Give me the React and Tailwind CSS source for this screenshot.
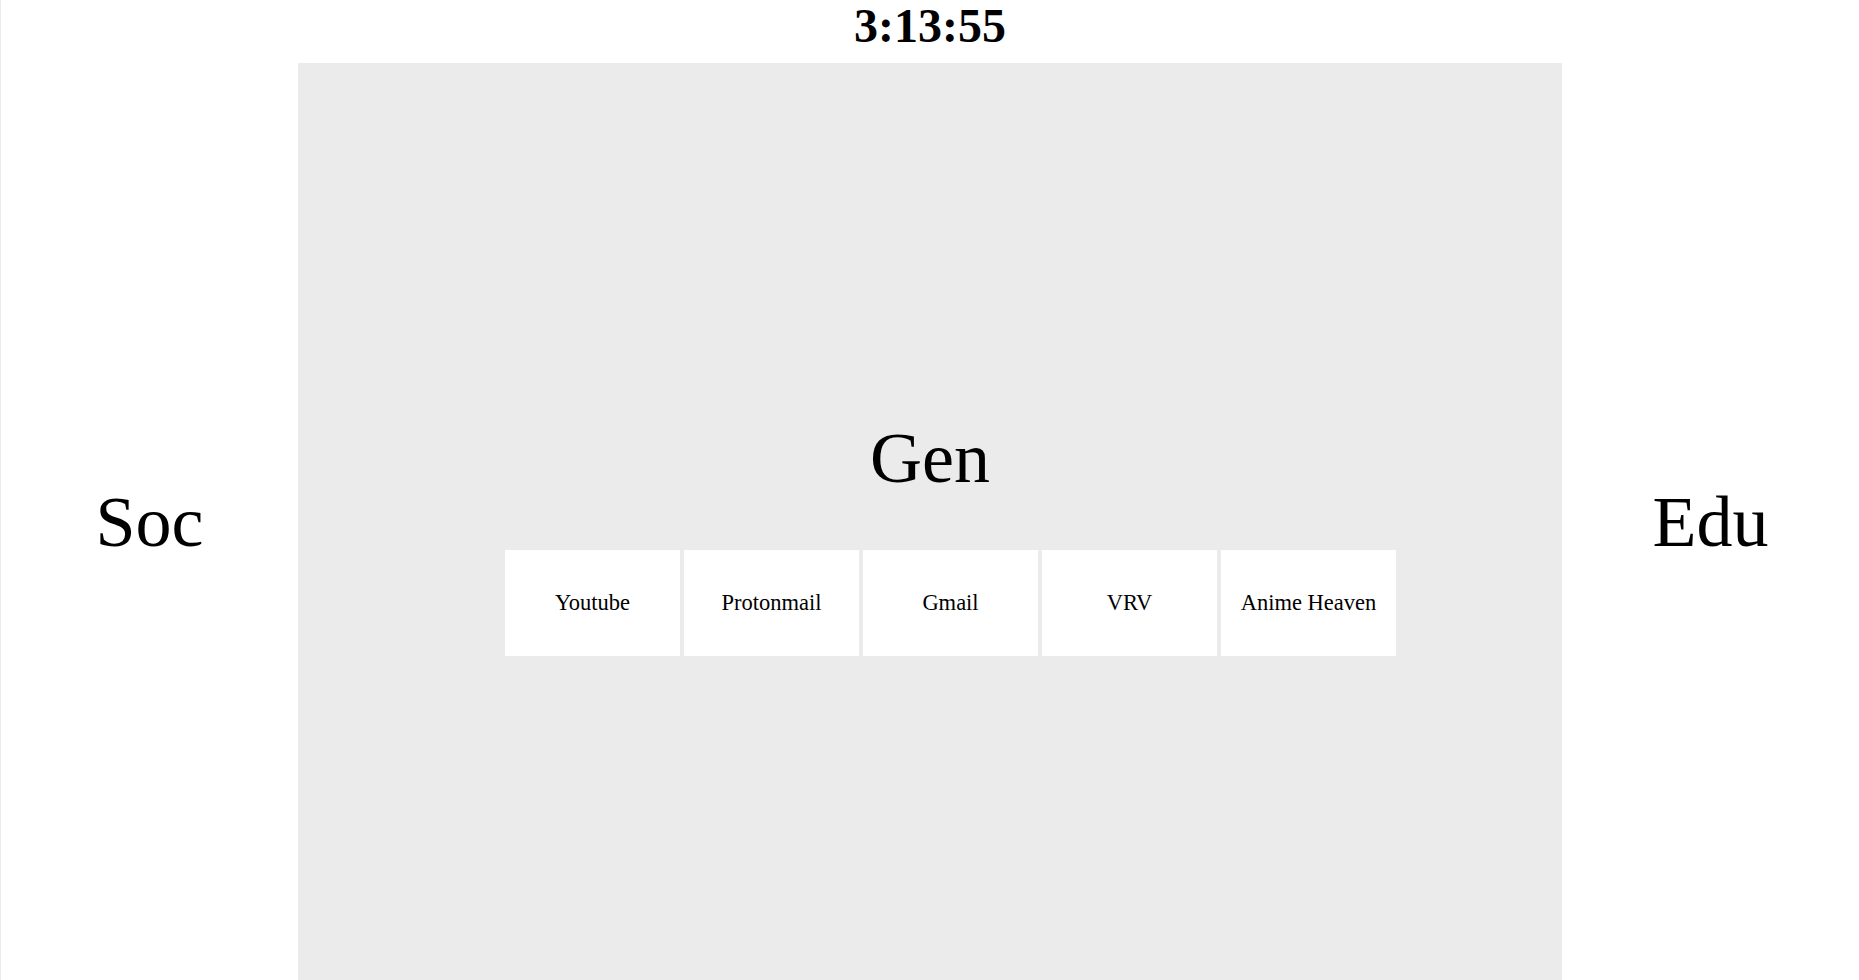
export default function App() {
  const links = ["Youtube", "Protonmail", "Gmail", "VRV", "Anime Heaven"];
  return (
    <div
      className="h-screen w-full flex flex-col bg-white text-black border-l border-[#ebebeb] overflow-hidden"
      style={{ fontFamily: '"Liberation Serif", "Times New Roman", serif' }}
    >
      <div className="h-[63px] shrink-0 flex items-start justify-center">
        <div className="text-[48px] font-bold leading-[48px] mt-[2px]">3:13:55</div>
      </div>
      <div className="flex-1 grid grid-cols-[297px_1264px_1fr] min-h-0">
        <div className="flex items-center justify-center">
          <div className="text-[72px] leading-[72px]">Soc</div>
        </div>
        <div className="bg-[#ebebeb] flex flex-col items-center justify-center">
          <div className="text-[72px] leading-[72px] mt-[35px]">Gen</div>
          <div className="flex gap-1 pl-[41px] mt-[56px]">
            {links.map((l) => (
              <div
                key={l}
                className="w-[175px] h-[106px] bg-white flex items-center justify-center text-[22.5px]"
              >
                {l}
              </div>
            ))}
          </div>
        </div>
        <div className="flex items-center justify-center">
          <div className="text-[72px] leading-[72px]">Edu</div>
        </div>
      </div>
    </div>
  );
}
